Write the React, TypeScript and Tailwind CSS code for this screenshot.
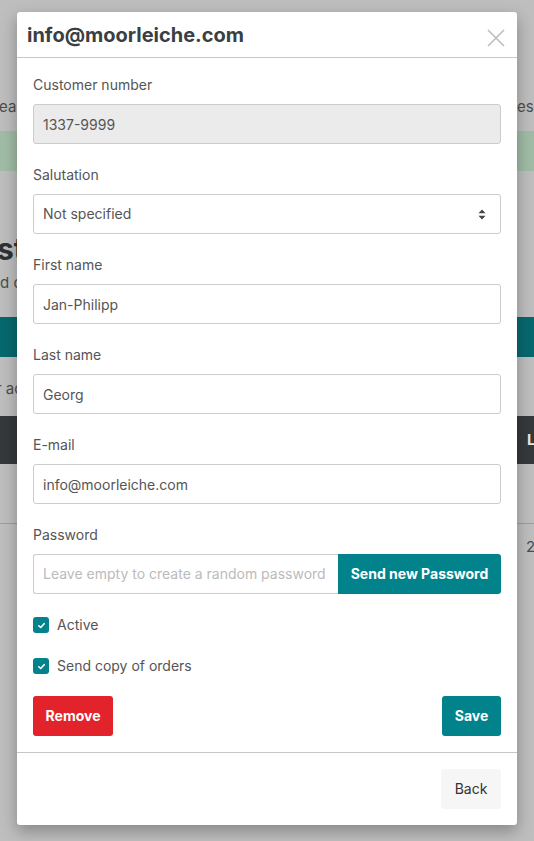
import React from "react";

const TEAL = "bg-[#02838b]";

function Field({ label, value, disabled }: { label: string; value: string; disabled?: boolean }) {
  return (
    <div className="mb-5">
      <label className="block text-sm leading-[22px] mb-2 text-[#555]">{label}</label>
      <input
        readOnly
        defaultValue={value}
        className={`block w-full h-[40px] border border-[#ccc] rounded-[3px] px-[9px] text-sm text-[#555] outline-none ${
          disabled ? "bg-[#ebebeb]" : "bg-white"
        }`}
      />
    </div>
  );
}

function Check({ label }: { label: string }) {
  return (
    <div className="flex items-center h-[22px] mb-[19px] gap-2">
      <span className={`w-4 h-4 rounded-[3px] ${TEAL} flex items-center justify-center`}>
        <svg width="9" height="9" viewBox="0 0 10 10">
          <path d="M2 5.3 L4.1 7.2 L8 3" fill="none" stroke="#fff" strokeWidth="1.8" strokeLinecap="round" strokeLinejoin="round" />
        </svg>
      </span>
      <span className="text-sm text-[#555]">{label}</span>
    </div>
  );
}

export default function App() {
  return (
    <div className="relative h-[841px] w-full overflow-hidden bg-[#bebebe] font-['Inter',sans-serif]">
      {/* ===== PAGE BEHIND THE BACKDROP ===== */}
      <div className="flex flex-col text-[#4d4d4d]">
        <div className="h-[96px]" />
        <div className="flex justify-between h-[22px] items-center text-[15px]">
          <span className="-ml-[1px]">ea</span>
          <span className="w-[17px]">es</span>
        </div>
        <div className="h-[13px]" />
        <div className="h-[40px] bg-[#a1bca6]" />
        <div className="h-[61px]" />
        <div className="h-[34px] flex items-center text-[30px] leading-[34px] font-bold text-[#2e3236]">
          <span className="-ml-[3px]">st</span>
        </div>
        <div className="h-[6px]" />
        <div className="h-[22px] flex items-center text-[15px]">
          <span>d c</span>
        </div>
        <div className="h-[23px]" />
        <div className="h-[40px] bg-[#07686e]" />
        <div className="h-[21px]" />
        <div className="h-[22px] flex items-center text-[15px]">
          <span className="-ml-[4px]">r ac</span>
        </div>
        <div className="h-[16px]" />
        <div className="h-[48px] bg-[#36393c] flex items-center justify-end">
          <span className="w-[7px] text-[15px] font-bold text-[#e6e6e6]">L</span>
        </div>
        <div className="h-[60px] border-b border-[#9c9c9c]" />
        <div className="h-[46px] flex items-center justify-end">
          <span className="w-[8px] text-[15px]">2</span>
        </div>
      </div>

      {/* ===== MODAL ===== */}
      <div className="absolute left-[17px] top-[12px] w-[500px] bg-white rounded-[3px] shadow-[0_6px_16px_rgba(0,0,0,0.3)]">
        <div className="flex items-center justify-between h-[46px] border-b border-[#c6c6c6] pl-[10px] pr-[12px]">
          <h4 className="text-[20px] font-bold text-[#3a3f44] leading-none">info@moorleiche.com</h4>
          <svg width="18" height="18" viewBox="0 0 18 18" className="mt-[7px]">
            <path d="M1 1 L17 17 M17 1 L1 17" stroke="#bdbdbd" strokeWidth="1.6" />
          </svg>
        </div>

        <div className="p-4">
          <Field label="Customer number" value="1337-9999" disabled />

          <div className="mb-5">
            <label className="block text-sm leading-[22px] mb-2 text-[#555]">Salutation</label>
            <div className="flex items-center justify-between h-[40px] border border-[#ccc] rounded-[3px] pl-[9px] pr-[14px] text-sm text-[#555]">
              <span>Not specified</span>
              <svg width="8" height="11" viewBox="0 0 8 11">
                <path d="M4 0.5 L7.5 4.3 H0.5 Z M4 10.5 L7.5 6.7 H0.5 Z" fill="#444" />
              </svg>
            </div>
          </div>

          <Field label="First name" value="Jan-Philipp" />
          <Field label="Last name" value="Georg" />
          <Field label="E-mail" value="info@moorleiche.com" />

          <div className="mb-5">
            <label className="block text-sm leading-[22px] mb-2 text-[#555]">Password</label>
            <div className="flex h-[40px]">
              <input
                placeholder="Leave empty to create a random password"
                className="flex-1 min-w-0 border border-[#ccc] border-r-0 rounded-l-[3px] px-[9px] text-sm text-[#555] placeholder:text-[#bbb] outline-none"
              />
              <button className={`w-[163px] ${TEAL} rounded-r-[3px] text-white text-sm font-bold`}>
                Send new Password
              </button>
            </div>
          </div>

          <Check label="Active" />
          <Check label="Send copy of orders" />

          <div className="flex justify-between">
            <button className="h-[40px] w-[80px] rounded-[3px] bg-[#e3232b] text-white text-sm font-bold">
              Remove
            </button>
            <button className={`h-[40px] w-[59px] rounded-[3px] ${TEAL} text-white text-sm font-bold`}>
              Save
            </button>
          </div>
        </div>

        <div className="border-t border-[#c6c6c6] p-4 flex justify-end">
          <button className="h-[40px] w-[60px] rounded-[3px] bg-[#f6f6f6] text-[#333] text-sm">
            Back
          </button>
        </div>
      </div>
    </div>
  );
}
